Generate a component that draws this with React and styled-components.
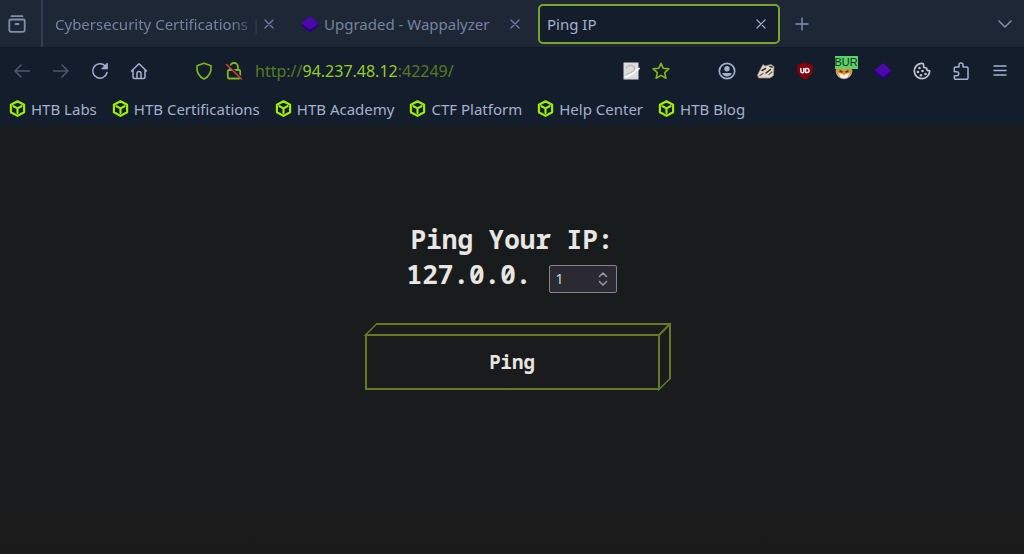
import { useState } from "react";
import styled, { createGlobalStyle } from "styled-components";

const GlobalStyle = createGlobalStyle`
  * {
    box-sizing: border-box;
  }
  body {
    margin: 0;
    background-color: #1a1b1c;
    font-family: "Noto Sans", sans-serif;
  }
  button {
    padding: 0;
    border: none;
    background: none;
    color: inherit;
    font: inherit;
  }
`;

const Window = styled.div`
  min-height: 100vh;
  display: flex;
  flex-direction: column;
`;

const Icon = styled.svg`
  width: ${(props) => props.$size || 18}px;
  height: ${(props) => props.$size || 18}px;
  flex-shrink: 0;
  display: block;
  fill: none;
  stroke: currentColor;
  stroke-width: 1.5;
  stroke-linecap: round;
  stroke-linejoin: round;
`;

// 탭 바
const TabBar = styled.div`
  height: 47px;
  display: flex;
  align-items: center;
  background-color: #1e2735;
  color: #8290a8;
`;

const SideButton = styled.button`
  width: 43px;
  height: 47px;
  padding-left: 8px;
  display: flex;
  align-items: center;
  border-right: 2px solid #343d4d;
`;

const Tabs = styled.div`
  flex: 1;
  min-width: 0;
  margin-left: 3px;
  display: flex;
  align-items: center;
  gap: 4px;
`;

const Tab = styled.div`
  flex: 0 1 242px;
  min-width: 0;
  height: 40px;
  padding: 0 11px 0 7px;
  display: flex;
  align-items: center;
  border: 2px solid ${(props) => (props.$active ? "#7ba32b" : "transparent")};
  border-radius: 5px;
  background-color: ${(props) => (props.$active ? "#141d2b" : "transparent")};
  color: ${(props) => (props.$active ? "#a4b1cd" : "#75849c")};
`;

const TabTitle = styled.span`
  flex: 1;
  min-width: 0;
  overflow: hidden;
  white-space: nowrap;
  font-size: 15px;
  line-height: 24px;
  mask-image: ${(props) =>
    props.$fade ? "linear-gradient(to left, transparent, black 32px)" : "none"};
`;

const TabIcon = styled.span`
  margin-right: 5px;
`;

const TabAction = styled.button`
  width: ${(props) => props.$width || 12}px;
  display: flex;
  justify-content: center;
`;

// 주소창 줄
const NavBar = styled.div`
  height: 46px;
  padding: 0 5px 0 2px;
  display: flex;
  align-items: center;
  background-color: #141d2b;
  border-top: 1px solid #111927;
  color: #a4b1cd;
`;

const ToolButton = styled.button`
  width: 39px;
  height: 36px;
  display: flex;
  align-items: center;
  justify-content: center;
  color: ${(props) => (props.$muted ? "#4d586b" : "#a4b1cd")};
`;

const UrlBar = styled.div`
  flex: 1;
  min-width: 0;
  margin: 0 37px;
  display: flex;
  align-items: center;
  gap: 12px;
  color: #80b719;
`;

const Url = styled.span`
  flex: 1;
  min-width: 0;
  overflow: hidden;
  white-space: nowrap;
  font-size: 16px;
  line-height: 24px;
  color: #567b22;
`;

const Host = styled.span`
  color: #94cf28;
`;

const BadgeHolder = styled.span`
  position: relative;
  display: block;
`;

const Badge = styled.span`
  position: absolute;
  top: -6px;
  left: 0;
  background-color: #5bd16b;
  color: #12301a;
  font-family: "Liberation Sans", sans-serif;
  font-size: 11px;
  line-height: 13px;
`;

// 북마크
const Bookmarks = styled.nav`
  height: 33px;
  padding: 0 9px 2px;
  display: flex;
  align-items: center;
  gap: 15px;
  background-color: #141d2b;
`;

const Bookmark = styled.a`
  display: flex;
  align-items: center;
  gap: 5px;
  color: #a4b1cd;
  font-size: 15px;
  line-height: 24px;
  white-space: nowrap;
  text-decoration: none;
`;

// 페이지
const Page = styled.main`
  flex: 1;
  padding-top: 96px;
  background-image: linear-gradient(#181c1d, #1a1a1b);
  color: #e8e6e3;
  font-family: "Noto Sans Mono", "DejaVu Sans Mono", monospace;
`;

const Form = styled.form`
  display: flex;
  flex-direction: column;
  align-items: center;
`;

const Title = styled.h1`
  margin: 0;
  font-size: 26px;
  line-height: 35px;
`;

const IpRow = styled.label`
  display: flex;
  align-items: baseline;
  gap: 18px;
  font-size: 26px;
  font-weight: bold;
  line-height: 35px;
`;

const NumberBox = styled.span`
  width: 68px;
  height: 28px;
  padding: 0 5px;
  display: flex;
  align-items: center;
  border: 1px solid #85848c;
  border-radius: 2px;
  background-color: #2b2a33;
  color: #9a99a1;
`;

const NumberInput = styled.input`
  flex: 1;
  width: 100%;
  min-width: 0;
  padding: 0;
  border: none;
  outline: none;
  background: none;
  color: #d6d5d8;
  font-family: "Noto Sans", sans-serif;
  font-size: 14px;
  appearance: textfield;
  &::-webkit-inner-spin-button {
    appearance: none;
    margin: 0;
  }
`;

const CubeButton = styled.button`
  position: relative;
  width: 295px;
  height: 56px;
  margin-top: 41px;
  border: 2px solid #637a26;
  font-size: 19px;
  font-weight: bold;
  &::before {
    content: "";
    position: absolute;
    left: 3px;
    bottom: 100%;
    width: 100%;
    height: 11px;
    border: 2px solid #637a26;
    border-bottom: none;
    transform: skewX(-45deg);
  }
  &::after {
    content: "";
    position: absolute;
    left: 100%;
    bottom: 3px;
    width: 11px;
    height: 100%;
    border: 2px solid #637a26;
    border-left: none;
    transform: skewY(-45deg);
  }
`;

const bookmarks = [
  "HTB Labs",
  "HTB Certifications",
  "HTB Academy",
  "CTF Platform",
  "Help Center",
  "HTB Blog",
];

const Close = () => (
  <Icon viewBox="0 0 12 12" $size={12}>
    <path d="M2 2l8 8M10 2l-8 8" strokeWidth="1.2" />
  </Icon>
);

const Wappalyzer = () => (
  <Icon viewBox="0 0 18 18">
    <path d="M0.500 8.500L9 5l8.500 3.500v2L9 17.500 0.500 10.500z" fill="#280080" stroke="none" />
    <path d="M0.500 8.500L9 1l8.500 7.500L9 15z" fill="#4b08ad" stroke="none" />
  </Icon>
);

const HtbCube = () => (
  <Icon viewBox="0 0 17 18" $size={17}>
    <path
      d="M8.500 1.300l7 3.800v7.800l-7 3.900-7-3.900V5.100zM4.300 6.600l4.200 2.300 4.200-2.300M8.500 9v4.800"
      stroke="#9fef00"
      strokeWidth="2.300"
    />
  </Icon>
);

function App() {
  const [ip, setIp] = useState("1");

  return (
    <Window>
      <GlobalStyle />
      <TabBar>
        <SideButton aria-label="Recent browsing">
          <Icon viewBox="0 0 18 18">
            <path d="M3.500 1.200h11M2.500 4.500h13a1.200 1.200 0 0 1 1.200 1.200v9.300a1.800 1.800 0 0 1-1.800 1.800H3.100a1.800 1.800 0 0 1-1.800-1.800V5.700a1.200 1.200 0 0 1 1.200-1.200zM7.500 9h3" strokeWidth="1.800" />
          </Icon>
        </SideButton>
        <Tabs>
          <Tab>
            <TabTitle $fade>Cybersecurity Certifications |</TabTitle>
            <TabAction aria-label="Close tab">
              <Close />
            </TabAction>
          </Tab>
          <Tab>
            <TabIcon>
              <Wappalyzer />
            </TabIcon>
            <TabTitle>Upgraded - Wappalyzer</TabTitle>
            <TabAction aria-label="Close tab">
              <Close />
            </TabAction>
          </Tab>
          <Tab $active>
            <TabTitle>Ping IP</TabTitle>
            <TabAction aria-label="Close tab">
              <Close />
            </TabAction>
          </Tab>
          <TabAction $width={36} aria-label="New tab">
            <Icon viewBox="0 0 16 16" $size={16}>
              <path d="M8 2v12M2 8h12" />
            </Icon>
          </TabAction>
        </Tabs>
        <TabAction $width={39} aria-label="List all tabs">
          <Icon viewBox="0 0 16 16" $size={16}>
            <path d="M2 5l6 6 6-6" />
          </Icon>
        </TabAction>
      </TabBar>

      <NavBar>
        <ToolButton $muted aria-label="Back">
          <Icon viewBox="0 0 18 18">
            <path d="M16.500 9H2M8 3L2 9l6 6" />
          </Icon>
        </ToolButton>
        <ToolButton $muted aria-label="Forward">
          <Icon viewBox="0 0 18 18">
            <path d="M1.500 9H16M10 3l6 6-6 6" />
          </Icon>
        </ToolButton>
        <ToolButton aria-label="Reload">
          <Icon viewBox="0 0 18 18">
            <path d="M16 10.500A7.200 7.200 0 1 1 14.200 4" />
            <path d="M16.300 1.500v5.300H11z" fill="currentColor" strokeWidth="1" />
          </Icon>
        </ToolButton>
        <ToolButton aria-label="Home">
          <Icon viewBox="0 0 18 18">
            <path d="M1.500 9L9 1.700 16.500 9M3 8v7a1.500 1.500 0 0 0 1.500 1.500h9A1.500 1.500 0 0 0 15 15V8M7 16.300V11.500a2 2 0 0 1 4 0v4.800" />
          </Icon>
        </ToolButton>
        <UrlBar>
          <Icon viewBox="0 0 18 18">
            <path d="M9 1.200l7 2.500c0.500 5.500-1.500 10.800-7 13.200C3.500 14.500 1.500 9.200 2 3.700z" strokeWidth="1.600" />
          </Icon>
          <Icon viewBox="0 0 18 18">
            <path d="M5 8V5a4 4 0 0 1 8 0V8M4 8h10A1.200 1.200 0 0 1 15.200 9.200v6a1.300 1.300 0 0 1-1.300 1.300H4.100a1.300 1.300 0 0 1-1.300-1.300v-6A1.200 1.200 0 0 1 4 8z" strokeWidth="1.800" />
            <path d="M2.500 2l14 14" stroke="#141d2b" strokeWidth="2" />
            <path d="M1.500 2.500L16.500 17" stroke="#d83a4e" />
          </Icon>
          <Url>
            http://<Host>94.237.48.12</Host>:42249/
          </Url>
          <Icon viewBox="0 0 18 18">
            <path d="M1.500 0.500h15v17h-15z" fill="#dcdcdc" stroke="none" />
            <path d="M4.500 6.500c0-4 8-4 8 0s-5 4-8 6.500" stroke="#bababa" strokeWidth="1.300" />
            <path d="M17 6.500L10 12l-6 3" stroke="#f8f8f8" strokeWidth="2" />
          </Icon>
          <Icon viewBox="0 0 18 18">
            <path d="M9 1.300l2.300 5 5.500 0.600-4.100 3.700 1.200 5.600L9 13.400l-4.900 2.800 1.200-5.600L1.200 6.900l5.500-0.600z" strokeWidth="1.600" />
          </Icon>
        </UrlBar>
        <ToolButton aria-label="Account">
          <Icon viewBox="0 0 18 18">
            <circle cx="9" cy="9" r="7.700" strokeWidth="1.700" />
            <circle cx="9" cy="6.800" r="2.700" fill="currentColor" stroke="none" />
            <path d="M4.200 11h9.600c-0.600 2.200-2.500 3.500-4.800 3.500S4.800 13.200 4.200 11z" fill="currentColor" stroke="none" />
          </Icon>
        </ToolButton>
        <ToolButton aria-label="Privacy Badger">
          <Icon viewBox="0 0 18 18">
            <path d="M0.500 13L3.500 7 6 2.500l2 1.500 6-1.500 3 2-0.500 9-3.500 2.500H2z" fill="#e2d9ce" stroke="#a08775" strokeWidth="0.800" />
            <path d="M5 8.500l3.500-2M9 11l4.500-3.500M13 4.500l2 0.500" stroke="#302a29" strokeWidth="1.500" />
            <path d="M3 13.500l3-2M12 12.500l3-2.500" stroke="#6d5f55" strokeWidth="1.200" />
          </Icon>
        </ToolButton>
        <ToolButton aria-label="uBlock Origin">
          <Icon viewBox="0 0 18 18">
            <path d="M9 0.700l7.500 2.500c0.500 7-0.500 11-7.500 14.200C2 14.200 1 10.200 1.500 3.200z" fill="#830009" stroke="#6b0a12" strokeWidth="0.700" />
            <path d="M4.800 6.500v2.700a1.500 1.500 0 0 0 3 0V6.500M9.500 6.500h1.500a2 2 0 0 1 0 4H9.500z" stroke="#fff" strokeWidth="1.400" />
          </Icon>
        </ToolButton>
        <ToolButton aria-label="FoxyProxy">
          <BadgeHolder>
            <Icon viewBox="0 0 18 18">
              <circle cx="9" cy="9" r="8.300" fill="#b9aaa0" stroke="none" />
              <path d="M1 5l8 3 8-3-1 7-7 4-7-4z" fill="#e68a24" stroke="none" />
              <path d="M3 11l5 1 1 2 1-2 5-1-3 5H6z" fill="#fff2df" stroke="none" />
              <path d="M5 9l2 1M13 9l-2 1" stroke="#51331c" />
            </Icon>
            <Badge>BUR</Badge>
          </BadgeHolder>
        </ToolButton>
        <ToolButton aria-label="Wappalyzer">
          <Wappalyzer />
        </ToolButton>
        <ToolButton aria-label="Cookie Editor">
          <Icon viewBox="0 0 18 18">
            <path d="M8.500 1.300a7.700 7.700 0 1 0 8.200 7.500l-2.500-0.500-0.700-2.300-2.700-0.500-0.500-3.700z" stroke="#c0c6d1" strokeWidth="1.700" />
            <g fill="#c0c6d1" stroke="none">
              <circle cx="6.500" cy="6" r="1.300" />
              <circle cx="5" cy="10" r="1.300" />
              <circle cx="9.500" cy="9" r="1.300" />
              <circle cx="8" cy="13.300" r="1.300" />
              <circle cx="12.500" cy="12" r="1.300" />
            </g>
          </Icon>
        </ToolButton>
        <ToolButton aria-label="Extensions">
          <Icon viewBox="0 0 18 18">
            <path d="M2.300 7V6.200A1.200 1.200 0 0 1 3.500 5H7V3a2 2 0 0 1 4 0v2h3.800A1.200 1.200 0 0 1 16 6.200V16a1.200 1.200 0 0 1-1.200 1.200H3.500A1.200 1.200 0 0 1 2.300 16v-2.200h2.400a2 2 0 0 0 0-4H2.300z" />
          </Icon>
        </ToolButton>
        <ToolButton aria-label="Menu">
          <Icon viewBox="0 0 18 18">
            <path d="M3 4h12M3 8.500h12M3 13h12" />
          </Icon>
        </ToolButton>
      </NavBar>

      <Bookmarks>
        {bookmarks.map((name) => (
          <Bookmark key={name} href="#">
            <HtbCube />
            {name}
          </Bookmark>
        ))}
      </Bookmarks>

      <Page>
        <Form onSubmit={(e) => e.preventDefault()}>
          <Title>Ping Your IP:</Title>
          <IpRow>
            127.0.0.
            <NumberBox>
              <NumberInput
                type="number"
                value={ip}
                onChange={(e) => setIp(e.target.value)}
              />
              <Icon viewBox="0 0 14 16" $size={16}>
                <path d="M3.500 5.500L7 2l3.500 3.500M3.500 10.500L7 14l3.500-3.500" />
              </Icon>
            </NumberBox>
          </IpRow>
          <CubeButton type="submit">Ping</CubeButton>
        </Form>
      </Page>
    </Window>
  );
}

export default App;
